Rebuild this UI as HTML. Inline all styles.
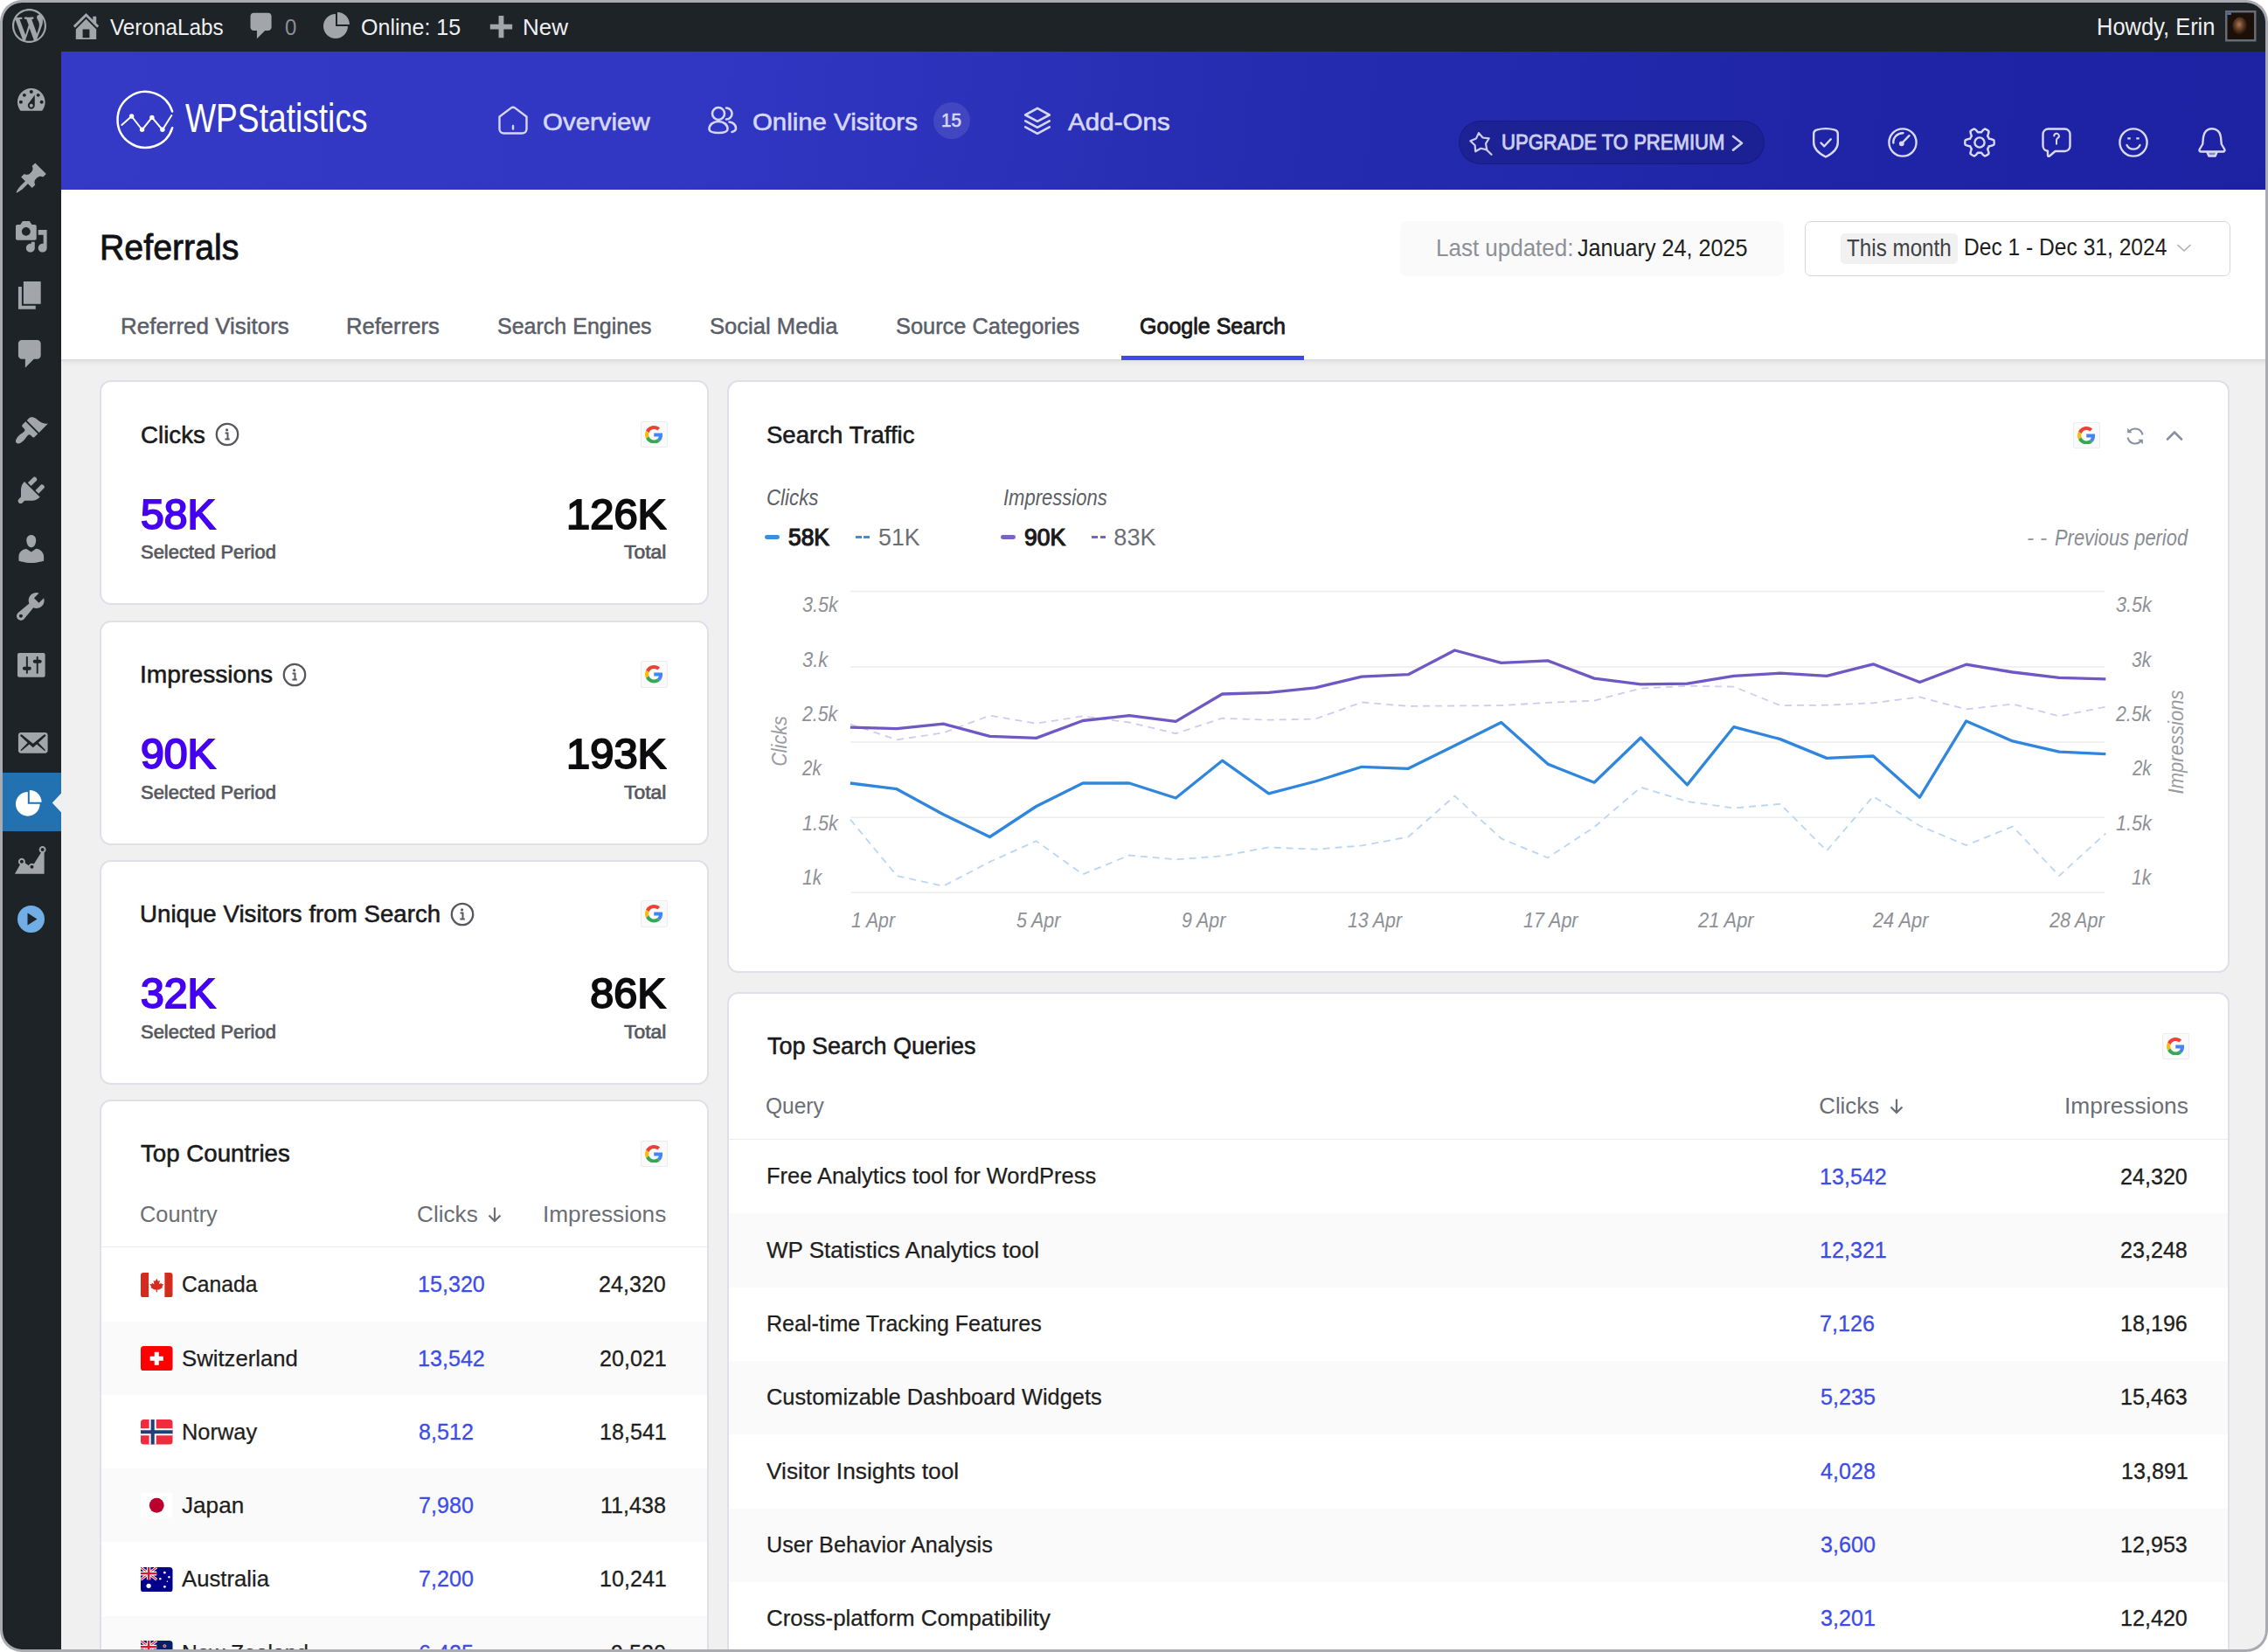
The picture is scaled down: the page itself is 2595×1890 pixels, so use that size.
<!DOCTYPE html>
<html lang="en"><head><meta charset="utf-8"><title>Referrals - Google Search - WP Statistics</title>
<style>
html,body{margin:0;padding:0;background:#fff;width:2595px;height:1890px;overflow:hidden}
body{font-family:"Liberation Sans",sans-serif;position:relative}
#frame{position:absolute;left:0;top:0;width:2595px;height:1890px;border-radius:25px;overflow:hidden;background:#a9abb0}
#inner{position:absolute;left:3px;top:3px;right:3px;bottom:3px;border-radius:22px;overflow:hidden;background:#f0f0f1}
#c{position:absolute;left:-3px;top:-3px;width:2595px;height:1890px}
.a{position:absolute;display:block}
.t{position:absolute;white-space:nowrap;line-height:1;transform-origin:0 0}
.gb{background:#fafafa;border:1.5px solid #ececee;box-sizing:border-box;border-radius:2px}
</style></head><body>
<div id="frame"><div id="inner"><div id="c">
<div class="a" style="left:0.0px;top:0.0px;width:2595.0px;height:58.6px;background:#1d2327"></div>
<div class="a" style="left:0.0px;top:58.0px;width:70.2px;height:1890.0px;background:#1d2327"></div>
<svg class="a" style="left:14.0px;top:9.8px" width="39.0" height="39.0" viewBox="0 0 20 20"><path fill="#a2a6ab" d="M20 10c0-5.51-4.49-10-10-10C4.48 0 0 4.49 0 10c0 5.52 4.48 10 10 10 5.51 0 10-4.48 10-10zM7.78 15.37L4.37 6.22c.55-.02 1.17-.08 1.17-.08.5-.06.44-1.13-.06-1.11 0 0-1.45.11-2.37.11-.18 0-.37 0-.58-.01C4.12 2.69 6.87 1.11 10 1.11c2.33 0 4.45.87 6.05 2.34-.68-.11-1.65.39-1.65 1.58 0 .74.45 1.36.9 2.1.35.61.55 1.36.55 2.46 0 1.49-1.4 5-1.4 5l-3.03-8.37c.54-.02.82-.17.82-.17.5-.05.44-1.25-.06-1.22 0 0-1.44.12-2.38.12-.87 0-2.33-.12-2.33-.12-.5-.03-.56 1.2-.06 1.22l.92.08 1.26 3.41zM17.41 10c.24-.64.74-1.87.43-4.25.7 1.29 1.05 2.71 1.05 4.25 0 3.29-1.73 6.24-4.4 7.78.97-2.59 1.94-5.2 2.92-7.78zM6.1 18.09C3.12 16.65 1.11 13.53 1.11 10c0-1.3.23-2.48.72-3.59C3.25 10.3 4.67 14.2 6.1 18.09zm4.03-6.63l2.58 6.98c-.86.29-1.76.45-2.71.45-.79 0-1.57-.11-2.29-.33.81-2.38 1.62-4.74 2.42-7.1z"/></svg>
<svg class="a" style="left:78.8px;top:9.8px" width="39.0" height="39.0" viewBox="0 0 20 20"><path fill="#a2a6ab" d="M16 8.5l1.53 1.53-1.06 1.06L10 4.62l-6.47 6.47-1.06-1.06L10 2.5l4 4v-2h2v4zm-6-2.46l6 5.99V18H4v-5.97zM12 17v-5H8v5h4z"/></svg>
<div class="t" style="left:125.9px;top:18.27px;font-size:26.6px;color:#f0f0f1;transform:scaleX(0.9126);">VeronaLabs</div>
<svg class="a" style="left:281.3px;top:10.9px" width="37.0" height="37.0" viewBox="0 0 20 20"><path fill="#a2a6ab" d="M5 2h9c1.1 0 2 .9 2 2v7c0 1.1-.9 2-2 2h-2l-5 5v-5H5c-1.1 0-2-.9-2-2V4c0-1.1.9-2 2-2z"/></svg>
<div class="t" style="left:325.56px;top:18.27px;font-size:26.6px;color:#8c8f94;transform:scaleX(0.9026);">0</div>
<svg class="a" style="left:365.5px;top:7.6px" width="40.0" height="40.0" viewBox="0 0 20 20"><path fill="#a2a6ab" d="M10 10V3c3.87 0 7 3.13 7 7h-7zM9 4v7h7c0 3.87-3.13 7-7 7s-7-3.13-7-7 3.13-7 7-7z"/></svg>
<div class="t" style="left:413.02px;top:18.27px;font-size:26.6px;color:#f0f0f1;transform:scaleX(0.942);">Online: 15</div>
<svg class="a" style="left:553.3px;top:13.8px" width="39.0" height="39.0" viewBox="0 0 20 20"><path fill="#a2a6ab" d="M17 7v3h-5v5H9v-5H4V7h5V2h3v5h5z"/></svg>
<div class="t" style="left:598.17px;top:18.27px;font-size:26.6px;color:#f0f0f1;transform:scaleX(0.9785);">New</div>
<div class="t" style="left:2398.71px;top:18.3px;font-size:27.03px;color:#f0f0f1;transform:scaleX(0.943);">Howdy, Erin</div>
<svg class="a" style="left:2546px;top:12px" width="35.5" height="35.5" viewBox="0 0 36 36"><defs><radialGradient id="av" cx="0.45" cy="0.42" r="0.6"><stop offset="0" stop-color="#a97a58"/><stop offset="0.5" stop-color="#5e3a24"/><stop offset="1" stop-color="#160b06"/></radialGradient></defs><rect x="0" y="0" width="36" height="36" fill="#686c74"/><rect x="2.5" y="2.5" width="31" height="31" fill="#1b0f09"/><ellipse cx="17" cy="18" rx="8.5" ry="10.5" fill="url(#av)"/><rect x="2.5" y="2.5" width="4.5" height="2.5" fill="#4a7bc0"/></svg>
<svg class="a" style="left:16.0px;top:95.2px" width="39.6" height="39.6" viewBox="0 0 20 20"><path fill="#a2a6ab" d="M3.76 16h12.48c1.1-1.37 1.76-3.11 1.76-5 0-4.42-3.58-8-8-8s-8 3.58-8 8c0 1.89.66 3.63 1.76 5zM10 4c.55 0 1 .45 1 1s-.45 1-1 1-1-.45-1-1 .45-1 1-1zM6 6c.55 0 1 .45 1 1s-.45 1-1 1-1-.45-1-1 .45-1 1-1zm8 0c.55 0 1 .45 1 1s-.45 1-1 1-1-.45-1-1 .45-1 1-1zm-5.37 5.55L12 7v6c0 1.1-.9 2-2 2s-2-.9-2-2c0-.57.24-1.08.63-1.45zM4 10c.55 0 1 .45 1 1s-.45 1-1 1-1-.45-1-1 .45-1 1-1zm12 0c.55 0 1 .45 1 1s-.45 1-1 1-1-.45-1-1 .45-1 1-1zm-5 3c0-.55-.45-1-1-1s-1 .45-1 1 .45 1 1 1 1-.45 1-1z"/></svg>
<svg class="a" style="left:15.5px;top:183.8px" width="39.6" height="39.6" viewBox="0 0 20 20"><path fill="#a2a6ab" d="M10.44 3.02l1.82-1.82 6.36 6.35-1.83 1.82c-1.05-.68-2.48-.57-3.41.36l-.75.75c-.92.93-1.04 2.35-.35 3.41l-1.83 1.82-2.41-2.41-2.8 2.79c-.42.42-3.38 2.71-3.8 2.29s1.86-3.39 2.28-3.81l2.79-2.79L4.1 9.36l1.83-1.82c1.05.69 2.48.57 3.4-.36l.75-.75c.93-.92 1.05-2.35.36-3.41z"/></svg>
<svg class="a" style="left:15.8px;top:251.2px" width="39.6" height="39.6" viewBox="0 0 20 20"><path fill="#a2a6ab" d="M13 11V4c0-.55-.45-1-1-1h-1.67L9 1H5L3.67 3H2c-.55 0-1 .45-1 1v7c0 .55.45 1 1 1h10c.55 0 1-.45 1-1zM7 4.5c1.38 0 2.5 1.12 2.5 2.5S8.38 9.5 7 9.5 4.5 8.38 4.5 7 5.62 4.5 7 4.5zM14 6h5v10.5c0 1.38-1.12 2.5-2.5 2.5S14 17.88 14 16.5s1.12-2.5 2.5-2.5c.17 0 .34.02.5.05V9h-3V6zm-4 8.05V13h2v3.5c0 1.38-1.12 2.5-2.5 2.5S7 17.88 7 16.5 8.12 14 9.5 14c.17 0 .34.02.5.05z"/></svg>
<svg class="a" style="left:14.5px;top:318.2px" width="39.6" height="39.6" viewBox="0 0 20 20"><path fill="#a2a6ab" d="M6 15V2h10v13H6zm-1 1h8v2H3V5h2v11z"/></svg>
<svg class="a" style="left:14.5px;top:385.2px" width="39.6" height="39.6" viewBox="0 0 20 20"><path fill="#a2a6ab" d="M5 2h9c1.1 0 2 .9 2 2v7c0 1.1-.9 2-2 2h-2l-5 5v-5H5c-1.1 0-2-.9-2-2V4c0-1.1.9-2 2-2z"/></svg>
<svg class="a" style="left:15.5px;top:473.2px" width="39.6" height="39.6" viewBox="0 0 20 20"><path fill="#a2a6ab" d="M14.48 11.06L7.41 3.99l1.5-1.5c.5-.56 2.3-.47 3.51.32 1.21.8 1.43 1.28 2.91 2.1 1.18.64 2.45 1.26 4.45.85zm-.71.71L6.7 4.7 4.93 6.47c-.39.39-.39 1.02 0 1.41l1.06 1.06c.39.39.39 1.03 0 1.42-.6.6-1.43 1.11-2.21 1.69-.35.26-.7.53-1.01.84C1.43 14.23.4 16.08 1.4 17.07c.99 1 2.84-.03 4.18-1.36.31-.31.58-.66.85-1.02.57-.78 1.08-1.61 1.69-2.21.39-.39 1.02-.39 1.41 0l1.06 1.06c.39.39 1.02.39 1.41 0z"/></svg>
<svg class="a" style="left:15.8px;top:541.2px" width="39.6" height="39.6" viewBox="0 0 20 20"><path fill="#a2a6ab" d="M13.11 4.36L9.87 7.6 8 5.73l3.24-3.24c.35-.34 1.05-.2 1.56.32.52.51.66 1.21.31 1.55zm-8 1.77l.91-1.12 9.01 9.01-1.19.84c-.71.71-2.63 1.16-3.82 1.16H6.14L4.9 17.26c-.59.59-1.54.59-2.12 0-.59-.58-.59-1.53 0-2.12l1.24-1.24v-3.88c0-1.13.4-3.19 1.09-3.89zm7.26 3.97l3.24-3.24c.34-.35 1.04-.21 1.55.31.52.51.66 1.21.31 1.55l-3.24 3.25z"/></svg>
<svg class="a" style="left:15.5px;top:608.2px" width="39.6" height="39.6" viewBox="0 0 20 20"><path fill="#a2a6ab" d="M10 9.25c-2.27 0-2.73-3.44-2.73-3.44C7 4.02 7.82 2 9.97 2c2.16 0 2.98 2.02 2.71 3.81 0 0-.41 3.44-2.68 3.44zm0 2.57L12.72 10c2.39 0 4.52 2.33 4.52 4.53v2.49s-3.65 1.13-7.24 1.13c-3.65 0-7.24-1.13-7.24-1.13v-2.49c0-2.25 1.94-4.48 4.47-4.48z"/></svg>
<svg class="a" style="left:15.2px;top:674.2px" width="39.6" height="39.6" viewBox="0 0 20 20"><path fill="#a2a6ab" d="M16.68 9.77c-1.34 1.34-3.3 1.67-4.95.99l-5.41 6.52c-.99.99-2.59.99-3.58 0s-.99-2.59 0-3.57l6.52-5.42c-.68-1.65-.35-3.61.99-4.95 1.28-1.28 3.12-1.62 4.72-1.06l-2.89 2.89 2.82 2.82 2.86-2.87c.53 1.58.18 3.39-1.08 4.65zM3.81 16.21c.4.39 1.04.39 1.43 0 .4-.4.4-1.04 0-1.43-.39-.4-1.03-.4-1.43 0-.39.39-.39 1.03 0 1.43z"/></svg>
<svg class="a" style="left:16.4px;top:741.2px" width="39.6" height="39.6" viewBox="0 0 20 20"><path fill="#a2a6ab" d="M18 16V4c0-.55-.45-1-1-1H3c-.55 0-1 .45-1 1v12c0 .55.45 1 1 1h14c.55 0 1-.45 1-1zM8 11h1c.55 0 1 .45 1 1s-.45 1-1 1H8v1.5c0 .28-.22.5-.5.5s-.5-.22-.5-.5V13H6c-.55 0-1-.45-1-1s.45-1 1-1h1V5.5c0-.28.22-.5.5-.5s.5.22.5.5V11zm5-2h-1c-.55 0-1-.45-1-1s.45-1 1-1h1V5.5c0-.28.22-.5.5-.5s.5.22.5.5V7h1c.55 0 1 .45 1 1s-.45 1-1 1h-1v5.5c0 .28-.22.5-.5.5s-.5-.22-.5-.5V9z"/></svg>
<svg class="a" style="left:16.6px;top:830.2px" width="39.6" height="39.6" viewBox="0 0 20 20"><path fill="#a2a6ab" d="M19 14.5v-9c0-.83-.67-1.5-1.5-1.5H3.49c-.83 0-1.5.67-1.5 1.5v9c0 .83.67 1.5 1.5 1.5H17.5c.83 0 1.5-.67 1.5-1.5zm-1.31-9.11c.33.33.15.67-.03.84L13.6 9.95l3.9 4.06c.12.14.2.36.06.51-.13.16-.43.15-.56.05l-4.37-3.73-2.14 1.95-2.13-1.95-4.37 3.73c-.13.1-.43.11-.56-.05-.14-.15-.06-.37.06-.51l3.9-4.06-4.06-3.72c-.18-.17-.36-.51-.03-.84s.67-.17.95.07l6.24 5.04 6.25-5.04c.28-.24.62-.4.95-.07z"/></svg>
<div class="a" style="left:3.0px;top:884.0px;width:67.2px;height:67.0px;background:#2271b1"></div>
<svg class="a" style="left:14.4px;top:897.7px" width="39.6" height="39.6" viewBox="0 0 20 20"><path fill="#ffffff" d="M10 10V3c3.87 0 7 3.13 7 7h-7zM9 4v7h7c0 3.87-3.13 7-7 7s-7-3.13-7-7 3.13-7 7-7z"/></svg>
<svg class="a" style="left:58.5px;top:906px" width="12" height="25" viewBox="0 0 12 25"><path d="M12 0.5L0.8 12.5L12 24.5z" fill="#f0f0f1"/></svg>
<svg class="a" style="left:15.0px;top:964.2px" width="39.6" height="39.6" viewBox="0 0 20 20"><path fill="#a2a6ab" d="M18 18l.01-12.28c.59-.35.99-.99.99-1.72 0-1.1-.9-2-2-2s-2 .9-2 2c0 .8.47 1.48 1.14 1.8l-4.13 6.58c-.33-.24-.73-.38-1.16-.38-.84 0-1.55.51-1.85 1.24l-2.14-1.53c.09-.22.14-.46.14-.71 0-1.11-.89-2-2-2-1.1 0-2 .89-2 2 0 .73.4 1.36.98 1.71L1 18h17zM17 3c.55 0 1 .45 1 1s-.45 1-1 1-1-.45-1-1 .45-1 1-1zM5 10c.55 0 1 .45 1 1s-.45 1-1 1-1-.45-1-1 .45-1 1-1zm5.85 3c.55 0 1 .45 1 1s-.45 1-1 1-1-.45-1-1 .45-1 1-1z"/></svg>
<svg class="a" style="left:19.5px;top:1035.5px" width="31" height="31" viewBox="0 0 31 31"><circle cx="15.5" cy="15.5" r="15.5" fill="#72aee6"/><path d="M11.5 8.5L22.5 15.5L11.5 22.5z" fill="#1d2327"/></svg>
<div class="a" style="left:70.2px;top:58.6px;width:2524.8px;height:158.0px;background:linear-gradient(96deg,#343ac6 0%,#3137c3 28%,#262cb0 55%,#1f25a6 80%,#1c22a2 100%)"></div>
<svg class="a" style="left:128.6px;top:98px" width="78" height="78" viewBox="0 0 78 78"><g fill="none" stroke="#fff" stroke-width="2.5" stroke-linecap="round" stroke-linejoin="round"><path d="M68.1 29.5A32 32 0 1 0 68.1 48.3"/><path d="M10.3 44.9L21.6 35L33.6 50.5L44.9 36.4L56.9 50.5L67.3 34" stroke-width="2"/></g><circle cx="21.6" cy="35" r="2.7" fill="#fff"/><circle cx="33.6" cy="50.3" r="2.7" fill="#fff"/><circle cx="44.9" cy="36.4" r="2.7" fill="#fff"/><circle cx="56.9" cy="50.3" r="2.7" fill="#fff"/></svg>
<div class="t" style="left:211.55px;top:113.4px;font-size:45.93px;color:#ffffff;transform:scaleX(0.8092);">WPStatistics</div>
<svg class="a" style="left:567px;top:119px" width="40" height="38" viewBox="0 0 40 38"><g fill="none" stroke="#d6d7f6" stroke-width="2.4" stroke-linecap="round" stroke-linejoin="round"><path d="M4.5 14.5L17.6 4.6a4 4 0 0 1 4.8 0L35.5 14.5V28.5a5 5 0 0 1-5 5h-21a5 5 0 0 1-5-5z"/><path d="M20 25v3.5"/></g></svg>
<div class="t" style="left:621.12px;top:125.56px;font-size:27.33px;color:#d6d7f6;transform:scaleX(1.0775);-webkit-text-stroke:0.6px #d6d7f6;">Overview</div>
<svg class="a" style="left:807px;top:119px" width="40" height="38" viewBox="0 0 40 38"><g fill="none" stroke="#d6d7f6" stroke-width="2.6" stroke-linecap="round" stroke-linejoin="round"><circle cx="15" cy="11" r="7"/><path d="M4.5 28.5c0-5 4.5-8.5 10.5-8.5s10.5 3.5 10.5 8.5c0 3-4.5 4.5-10.5 4.5s-10.5-1.5-10.5-4.5z"/><path d="M24 4.5a6.5 6.5 0 0 1 0 13"/><path d="M27.5 20.5c4.5 0.8 7.5 3.6 7.5 7.5c0 1.8-1.6 3.2-4.5 4"/></g></svg>
<div class="t" style="left:860.72px;top:125.56px;font-size:27.33px;color:#d6d7f6;transform:scaleX(1.0749);-webkit-text-stroke:0.6px #d6d7f6;">Online Visitors</div>
<div class="a" style="left:1067.5px;top:117px;width:42px;height:42px;border-radius:21px;background:rgba(255,255,255,0.105)"></div>
<div class="t" style="left:1076.78px;top:126.45px;font-size:22.97px;color:#d6d7f6;transform:scaleX(0.8971);-webkit-text-stroke:0.7px #d6d7f6;">15</div>
<svg class="a" style="left:1167px;top:119px" width="40" height="38" viewBox="0 0 40 38"><g fill="none" stroke="#d6d7f6" stroke-width="2.6" stroke-linecap="round" stroke-linejoin="round"><path d="M20 4.8L33.8 12.5L20 19.8L6.2 12.5z"/><path d="M6.2 19.3L20 26.8L33.8 19.3"/><path d="M6.2 26.3L20 33.8L33.8 26.3"/></g></svg>
<div class="t" style="left:1221.54px;top:125.56px;font-size:27.33px;color:#d6d7f6;transform:scaleX(1.0825);-webkit-text-stroke:0.6px #d6d7f6;">Add-Ons</div>
<div class="a" style="left:1668.9px;top:138.2px;width:350.0px;height:49.6px;border-radius:25px;background:rgba(24,28,130,0.55);border:1px solid rgba(20,24,110,0.55);box-sizing:border-box"></div>
<svg class="a" style="left:1681px;top:150.5px" width="30" height="30" viewBox="0 0 30 30"><g fill="none" stroke="#cdcff1" stroke-width="2.2" stroke-linecap="round" stroke-linejoin="round"><path d="M10.9 1.1 L15.6 6.5 L22.7 7.3 L19.0 13.4 L20.3 20.4 L13.4 18.8 L7.2 22.3 L6.6 15.2 L1.4 10.3 L7.9 7.6Z"/><path d="M20.5 21l5 4.8"/></g></svg>
<div class="t" style="left:1718.35px;top:151.11px;font-size:23.84px;color:#cdcff1;transform:scaleX(0.9256);-webkit-text-stroke:0.9px #cdcff1;">UPGRADE TO PREMIUM</div>
<svg class="a" style="left:1978px;top:151px" width="20" height="26" viewBox="0 0 20 26"><path d="M5 5L15 12.8L5 20.6" fill="none" stroke="#cdcff1" stroke-width="2.6" stroke-linecap="round" stroke-linejoin="round"/></svg>
<svg class="a" style="left:2070.0px;top:144.3px" width="38" height="38" viewBox="0 0 38 38"><g fill="none" stroke="#d9daf7" stroke-width="2.4" stroke-linecap="round" stroke-linejoin="round"><path d="M8.5 4.6Q19 1.6 29.5 4.6Q32.8 5.5 32.8 9V19C32.8 27 26 32 19 35.5C12 32 5.2 27 5.2 19V9Q5.2 5.5 8.5 4.6Z"/><path d="M13.5 19.5l3.8 3.8l7.5-8"/></g></svg>
<svg class="a" style="left:2158.0px;top:144.3px" width="38" height="38" viewBox="0 0 38 38"><g fill="none" stroke="#d9daf7" stroke-width="2.4" stroke-linecap="round" stroke-linejoin="round"><circle cx="19" cy="19" r="15.6"/><path d="M8.3 19.5A10.8 10.8 0 0 1 19.5 8.2"/><circle cx="17.8" cy="20.3" r="1.7" fill="#d9daf7"/><path d="M18.5 19.5l8-8.3"/></g></svg>
<svg class="a" style="left:2246.0px;top:144.3px" width="38" height="38" viewBox="0 0 38 38"><g fill="none" stroke="#d9daf7" stroke-width="2.4" stroke-linecap="round" stroke-linejoin="round"><circle cx="19" cy="19" r="5.6"/><path d="M35.7 19.0 L35.7 19.6 L35.7 20.2 L35.6 20.7 L35.5 21.3 L35.1 21.8 L34.2 22.2 L33.2 22.5 L32.2 22.8 L31.3 23.0 L30.3 23.1 L29.8 23.4 L29.7 23.8 L29.5 24.1 L29.3 24.5 L29.1 24.8 L28.9 25.2 L28.7 25.5 L28.5 25.9 L28.2 26.2 L28.2 26.8 L28.6 27.6 L28.9 28.6 L29.2 29.5 L29.4 30.5 L29.5 31.5 L29.3 32.2 L28.8 32.5 L28.3 32.8 L27.8 33.2 L27.4 33.5 L26.8 33.7 L26.3 34.0 L25.8 34.3 L25.3 34.5 L24.6 34.3 L23.8 33.8 L23.0 33.1 L22.3 32.3 L21.7 31.6 L21.1 30.9 L20.6 30.6 L20.2 30.6 L19.8 30.7 L19.4 30.7 L19.0 30.7 L18.6 30.7 L18.2 30.7 L17.8 30.6 L17.4 30.6 L16.9 30.9 L16.3 31.6 L15.7 32.3 L15.0 33.1 L14.2 33.8 L13.4 34.3 L12.7 34.5 L12.2 34.3 L11.7 34.0 L11.2 33.7 L10.7 33.5 L10.2 33.2 L9.7 32.8 L9.2 32.5 L8.7 32.2 L8.5 31.5 L8.6 30.5 L8.8 29.5 L9.1 28.6 L9.4 27.6 L9.8 26.8 L9.8 26.2 L9.5 25.9 L9.3 25.5 L9.1 25.2 L8.9 24.8 L8.7 24.5 L8.5 24.1 L8.3 23.8 L8.2 23.4 L7.7 23.1 L6.7 23.0 L5.8 22.8 L4.8 22.5 L3.8 22.2 L2.9 21.8 L2.5 21.3 L2.4 20.7 L2.3 20.2 L2.3 19.6 L2.3 19.0 L2.3 18.4 L2.3 17.8 L2.4 17.3 L2.5 16.7 L2.9 16.2 L3.8 15.8 L4.8 15.5 L5.8 15.2 L6.7 15.0 L7.7 14.9 L8.2 14.6 L8.3 14.2 L8.5 13.9 L8.7 13.5 L8.9 13.1 L9.1 12.8 L9.3 12.5 L9.5 12.1 L9.8 11.8 L9.8 11.2 L9.4 10.4 L9.1 9.4 L8.8 8.5 L8.6 7.5 L8.5 6.5 L8.7 5.8 L9.2 5.5 L9.7 5.2 L10.2 4.8 L10.6 4.5 L11.2 4.3 L11.7 4.0 L12.2 3.7 L12.7 3.5 L13.4 3.7 L14.2 4.2 L15.0 4.9 L15.7 5.7 L16.3 6.4 L16.9 7.1 L17.4 7.4 L17.8 7.4 L18.2 7.3 L18.6 7.3 L19.0 7.3 L19.4 7.3 L19.8 7.3 L20.2 7.4 L20.6 7.4 L21.1 7.1 L21.7 6.4 L22.3 5.7 L23.0 4.9 L23.8 4.2 L24.6 3.7 L25.3 3.5 L25.8 3.7 L26.3 4.0 L26.8 4.3 L27.4 4.5 L27.8 4.8 L28.3 5.2 L28.8 5.5 L29.3 5.8 L29.5 6.5 L29.4 7.5 L29.2 8.5 L28.9 9.4 L28.6 10.4 L28.2 11.2 L28.2 11.8 L28.5 12.1 L28.7 12.5 L28.9 12.8 L29.1 13.1 L29.3 13.5 L29.5 13.9 L29.7 14.2 L29.8 14.6 L30.3 14.9 L31.3 15.0 L32.2 15.2 L33.2 15.5 L34.2 15.8 L35.1 16.2 L35.5 16.7 L35.6 17.3 L35.7 17.8 L35.7 18.4Z"/></g></svg>
<svg class="a" style="left:2334.0px;top:144.3px" width="38" height="38" viewBox="0 0 38 38"><g fill="none" stroke="#d9daf7" stroke-width="2.4" stroke-linecap="round" stroke-linejoin="round"><path d="M9.5 3.5h19a6 6 0 0 1 6 6v13.5a6 6 0 0 1-6 6h-11l-6.5 5.5c-1 .8-2 .3-2-.9v-4.8a6 6 0 0 1-5.5-6v-13.3a6 6 0 0 1 6-6z"/><path d="M16.3 11.5a2.8 2.8 0 1 1 4.2 2.4c-1 .6-1.5 1.2-1.5 2.4v4.5" stroke-width="2"/></g></svg>
<svg class="a" style="left:2422.4px;top:144.3px" width="38" height="38" viewBox="0 0 38 38"><g fill="none" stroke="#d9daf7" stroke-width="2.4" stroke-linecap="round" stroke-linejoin="round"><circle cx="19" cy="19" r="15.6"/><path d="M11.5 22c1.5 3 4.3 4.6 7.5 4.6s6-1.6 7.5-4.6"/><path d="M14 13.2v2.4M24 13.2v2.4" stroke-width="3.4" stroke-linecap="butt"/></g></svg>
<svg class="a" style="left:2511.5px;top:144.3px" width="38" height="38" viewBox="0 0 38 38"><g fill="none" stroke="#d9daf7" stroke-width="2.4" stroke-linecap="round" stroke-linejoin="round"><path d="M19 3.3c5.5 0 9.5 4 10 9.5l.8 8.2 3.3 5.5c.9 1.5.1 3-1.6 3h-25c-1.7 0-2.5-1.5-1.6-3l3.3-5.5.8-8.2c.5-5.5 4.5-9.5 10-9.5z"/><path d="M13.5 30l1.8 4.5h7.4l1.8-4.5" fill="#d9daf7" fill-opacity="0.55"/></g></svg>
<div class="a" style="left:70.2px;top:216.6px;width:2524.8px;height:194.9px;background:#fff;box-shadow:0 2px 0 #dddee4,0 3px 7px rgba(0,0,0,0.07)"></div>
<div class="t" style="left:114.38px;top:263.62px;font-size:40.12px;color:#111114;transform:scaleX(0.9796);-webkit-text-stroke:0.8px #111114;">Referrals</div>
<div class="a" style="left:1602.0px;top:253.0px;width:439.0px;height:62.5px;background:#fafafa;border-radius:7px"></div>
<div class="t" style="left:1643.17px;top:269.54px;font-size:28.05px;color:#8d9096;transform:scaleX(0.9263);">Last updated:</div>
<div class="t" style="left:1805.32px;top:269.54px;font-size:28.05px;color:#1e1e20;transform:scaleX(0.8977);">January 24, 2025</div>
<div class="a" style="left:2065.0px;top:253.0px;width:486.5px;height:62.5px;background:#fff;border:1.5px solid #d4d6df;border-radius:7px;box-sizing:border-box"></div>
<div class="a" style="left:2105.5px;top:267.0px;width:134.5px;height:34.5px;background:#f1f1f2;border-radius:5px"></div>
<div class="t" style="left:2112.97px;top:269.61px;font-size:27.62px;color:#404145;transform:scaleX(0.877);">This month</div>
<div class="t" style="left:2246.88px;top:269.24px;font-size:28.05px;color:#1e1e20;transform:scaleX(0.8768);">Dec 1 - Dec 31, 2024</div>
<svg class="a" style="left:2489px;top:277px" width="20" height="14" viewBox="0 0 20 14"><path d="M3 3.5L10 10L17 3.5" fill="none" stroke="#aeb0b8" stroke-width="1.7" stroke-linecap="round" stroke-linejoin="round"/></svg>
<div class="t" style="left:137.52px;top:359.79px;font-size:26.45px;color:#5a5e68;transform:scaleX(0.9819);-webkit-text-stroke:0.5px #5a5e68;">Referred Visitors</div>
<div class="t" style="left:396.15px;top:359.79px;font-size:26.45px;color:#5a5e68;transform:scaleX(0.9689);-webkit-text-stroke:0.5px #5a5e68;">Referrers</div>
<div class="t" style="left:568.92px;top:359.79px;font-size:26.45px;color:#5a5e68;transform:scaleX(0.9463);-webkit-text-stroke:0.5px #5a5e68;">Search Engines</div>
<div class="t" style="left:811.9px;top:359.79px;font-size:26.45px;color:#5a5e68;transform:scaleX(0.9682);-webkit-text-stroke:0.5px #5a5e68;">Social Media</div>
<div class="t" style="left:1025.31px;top:359.79px;font-size:26.45px;color:#5a5e68;transform:scaleX(0.9602);-webkit-text-stroke:0.5px #5a5e68;">Source Categories</div>
<div class="t" style="left:1303.7px;top:359.79px;font-size:26.45px;color:#1a1a1c;transform:scaleX(0.9466);-webkit-text-stroke:0.9px #1a1a1c;">Google Search</div>
<div class="a" style="left:1282.6px;top:407.0px;width:209.2px;height:4.5px;background:#4048e8"></div>
<div class="a" style="left:114.0px;top:435.2px;width:696.5px;height:257.0px;background:#fff;border:2px solid #dedfe7;border-radius:13px;box-sizing:border-box"></div>
<div class="t" style="left:160.59px;top:483.68px;font-size:27.18px;color:#1a1a1c;transform:scaleX(1.0199);-webkit-text-stroke:0.55px #1a1a1c;">Clicks</div>
<svg class="a" style="left:245.3px;top:482.2px" width="30" height="30" viewBox="0 0 30 30"><circle cx="15" cy="15" r="12.2" fill="none" stroke="#56585e" stroke-width="2.3"/><circle cx="14.6" cy="9.8" r="1.6" fill="#56585e"/><path d="M12.6 13.4h2.9v7.2M12.4 20.6h5.4" fill="none" stroke="#56585e" stroke-width="2"/></svg>
<div class="a gb" style="left:733.0px;top:481.7px;width:30.5px;height:30.5px"></div><svg class="a" style="left:738.0px;top:486.7px" width="20.5" height="20.5" viewBox="0 0 48 48"><path fill="#EA4335" d="M24 9.5c3.54 0 6.71 1.22 9.21 3.6l6.85-6.85C35.9 2.38 30.47 0 24 0 14.62 0 6.51 5.38 2.56 13.22l7.98 6.19C12.43 13.72 17.74 9.5 24 9.5z"/><path fill="#4285F4" d="M46.98 24.55c0-1.57-.15-3.09-.38-4.55H24v9.02h12.94c-.58 2.96-2.26 5.48-4.78 7.18l7.73 6c4.51-4.18 7.09-10.36 7.09-17.65z"/><path fill="#FBBC05" d="M10.53 28.59c-.48-1.45-.76-2.99-.76-4.59s.27-3.14.76-4.59l-7.98-6.19C.92 16.46 0 20.12 0 24c0 3.88.92 7.54 2.56 10.78l7.97-6.19z"/><path fill="#34A853" d="M24 48c6.48 0 11.93-2.13 15.89-5.81l-7.73-6c-2.15 1.45-4.92 2.3-8.16 2.3-6.26 0-11.57-4.22-13.47-9.91l-7.98 6.19C6.51 42.62 14.62 48 24 48z"/></svg>
<div class="t" style="left:161.38px;top:563.58px;font-size:48.55px;color:#4500f2;transform:scaleX(0.9894);-webkit-text-stroke:2.00px #4500f2;">58K</div>
<div class="t" style="left:648.08px;top:563.58px;font-size:48.55px;color:#0c0c0e;transform:scaleX(1.007);-webkit-text-stroke:2.00px #0c0c0e;">126K</div>
<div class="t" style="left:160.56px;top:621.33px;font-size:21.8px;color:#56585e;transform:scaleX(1.0063);-webkit-text-stroke:0.7px #56585e;">Selected Period</div>
<div class="t" style="left:713.85px;top:621.33px;font-size:21.8px;color:#56585e;transform:scaleX(1.0492);-webkit-text-stroke:0.7px #56585e;">Total</div>
<div class="a" style="left:114.0px;top:709.5px;width:696.5px;height:257.0px;background:#fff;border:2px solid #dedfe7;border-radius:13px;box-sizing:border-box"></div>
<div class="t" style="left:159.68px;top:757.98px;font-size:27.18px;color:#1a1a1c;transform:scaleX(1.0385);-webkit-text-stroke:0.55px #1a1a1c;">Impressions</div>
<svg class="a" style="left:321.6px;top:756.5px" width="30" height="30" viewBox="0 0 30 30"><circle cx="15" cy="15" r="12.2" fill="none" stroke="#56585e" stroke-width="2.3"/><circle cx="14.6" cy="9.8" r="1.6" fill="#56585e"/><path d="M12.6 13.4h2.9v7.2M12.4 20.6h5.4" fill="none" stroke="#56585e" stroke-width="2"/></svg>
<div class="a gb" style="left:733.0px;top:756.0px;width:30.5px;height:30.5px"></div><svg class="a" style="left:738.0px;top:761.0px" width="20.5" height="20.5" viewBox="0 0 48 48"><path fill="#EA4335" d="M24 9.5c3.54 0 6.71 1.22 9.21 3.6l6.85-6.85C35.9 2.38 30.47 0 24 0 14.62 0 6.51 5.38 2.56 13.22l7.98 6.19C12.43 13.72 17.74 9.5 24 9.5z"/><path fill="#4285F4" d="M46.98 24.55c0-1.57-.15-3.09-.38-4.55H24v9.02h12.94c-.58 2.96-2.26 5.48-4.78 7.18l7.73 6c4.51-4.18 7.09-10.36 7.09-17.65z"/><path fill="#FBBC05" d="M10.53 28.59c-.48-1.45-.76-2.99-.76-4.59s.27-3.14.76-4.59l-7.98-6.19C.92 16.46 0 20.12 0 24c0 3.88.92 7.54 2.56 10.78l7.97-6.19z"/><path fill="#34A853" d="M24 48c6.48 0 11.93-2.13 15.89-5.81l-7.73-6c-2.15 1.45-4.92 2.3-8.16 2.3-6.26 0-11.57-4.22-13.47-9.91l-7.98 6.19C6.51 42.62 14.62 48 24 48z"/></svg>
<div class="t" style="left:161.08px;top:837.88px;font-size:48.55px;color:#4500f2;transform:scaleX(0.9929);-webkit-text-stroke:2.00px #4500f2;">90K</div>
<div class="t" style="left:648.08px;top:837.88px;font-size:48.55px;color:#0c0c0e;transform:scaleX(1.007);-webkit-text-stroke:2.00px #0c0c0e;">193K</div>
<div class="t" style="left:160.56px;top:895.63px;font-size:21.8px;color:#56585e;transform:scaleX(1.0063);-webkit-text-stroke:0.7px #56585e;">Selected Period</div>
<div class="t" style="left:713.85px;top:895.63px;font-size:21.8px;color:#56585e;transform:scaleX(1.0492);-webkit-text-stroke:0.7px #56585e;">Total</div>
<div class="a" style="left:114.0px;top:983.8px;width:696.5px;height:257.0px;background:#fff;border:2px solid #dedfe7;border-radius:13px;box-sizing:border-box"></div>
<div class="t" style="left:159.84px;top:1032.28px;font-size:27.18px;color:#1a1a1c;transform:scaleX(1.0189);-webkit-text-stroke:0.55px #1a1a1c;">Unique Visitors from Search</div>
<svg class="a" style="left:513.8px;top:1030.8px" width="30" height="30" viewBox="0 0 30 30"><circle cx="15" cy="15" r="12.2" fill="none" stroke="#56585e" stroke-width="2.3"/><circle cx="14.6" cy="9.8" r="1.6" fill="#56585e"/><path d="M12.6 13.4h2.9v7.2M12.4 20.6h5.4" fill="none" stroke="#56585e" stroke-width="2"/></svg>
<div class="a gb" style="left:733.0px;top:1030.3px;width:30.5px;height:30.5px"></div><svg class="a" style="left:738.0px;top:1035.3px" width="20.5" height="20.5" viewBox="0 0 48 48"><path fill="#EA4335" d="M24 9.5c3.54 0 6.71 1.22 9.21 3.6l6.85-6.85C35.9 2.38 30.47 0 24 0 14.62 0 6.51 5.38 2.56 13.22l7.98 6.19C12.43 13.72 17.74 9.5 24 9.5z"/><path fill="#4285F4" d="M46.98 24.55c0-1.57-.15-3.09-.38-4.55H24v9.02h12.94c-.58 2.96-2.26 5.48-4.78 7.18l7.73 6c4.51-4.18 7.09-10.36 7.09-17.65z"/><path fill="#FBBC05" d="M10.53 28.59c-.48-1.45-.76-2.99-.76-4.59s.27-3.14.76-4.59l-7.98-6.19C.92 16.46 0 20.12 0 24c0 3.88.92 7.54 2.56 10.78l7.97-6.19z"/><path fill="#34A853" d="M24 48c6.48 0 11.93-2.13 15.89-5.81l-7.73-6c-2.15 1.45-4.92 2.3-8.16 2.3-6.26 0-11.57-4.22-13.47-9.91l-7.98 6.19C6.51 42.62 14.62 48 24 48z"/></svg>
<div class="t" style="left:161.17px;top:1112.18px;font-size:48.55px;color:#4500f2;transform:scaleX(0.9918);-webkit-text-stroke:2.00px #4500f2;">32K</div>
<div class="t" style="left:675.21px;top:1112.18px;font-size:48.55px;color:#0c0c0e;-webkit-text-stroke:2.00px #0c0c0e;">86K</div>
<div class="t" style="left:160.56px;top:1169.93px;font-size:21.8px;color:#56585e;transform:scaleX(1.0063);-webkit-text-stroke:0.7px #56585e;">Selected Period</div>
<div class="t" style="left:713.85px;top:1169.93px;font-size:21.8px;color:#56585e;transform:scaleX(1.0492);-webkit-text-stroke:0.7px #56585e;">Total</div>
<div class="a" style="left:114.0px;top:1257.8px;width:696.5px;height:700.0px;background:#fff;border:2px solid #dedfe7;border-radius:13px;box-sizing:border-box"></div>
<div class="t" style="left:160.97px;top:1306.26px;font-size:27.33px;color:#1a1a1c;transform:scaleX(1.0128);-webkit-text-stroke:0.55px #1a1a1c;">Top Countries</div>
<div class="a gb" style="left:733.0px;top:1304.5px;width:30.5px;height:30.5px"></div><svg class="a" style="left:738.0px;top:1309.5px" width="20.5" height="20.5" viewBox="0 0 48 48"><path fill="#EA4335" d="M24 9.5c3.54 0 6.71 1.22 9.21 3.6l6.85-6.85C35.9 2.38 30.47 0 24 0 14.62 0 6.51 5.38 2.56 13.22l7.98 6.19C12.43 13.72 17.74 9.5 24 9.5z"/><path fill="#4285F4" d="M46.98 24.55c0-1.57-.15-3.09-.38-4.55H24v9.02h12.94c-.58 2.96-2.26 5.48-4.78 7.18l7.73 6c4.51-4.18 7.09-10.36 7.09-17.65z"/><path fill="#FBBC05" d="M10.53 28.59c-.48-1.45-.76-2.99-.76-4.59s.27-3.14.76-4.59l-7.98-6.19C.92 16.46 0 20.12 0 24c0 3.88.92 7.54 2.56 10.78l7.97-6.19z"/><path fill="#34A853" d="M24 48c6.48 0 11.93-2.13 15.89-5.81l-7.73-6c-2.15 1.45-4.92 2.3-8.16 2.3-6.26 0-11.57-4.22-13.47-9.91l-7.98 6.19C6.51 42.62 14.62 48 24 48z"/></svg>
<div class="t" style="left:159.73px;top:1377.29px;font-size:25.87px;color:#6b6e75;transform:scaleX(0.9806);">Country</div>
<div class="t" style="left:476.69px;top:1377.29px;font-size:25.87px;color:#6b6e75;transform:scaleX(1.0108);">Clicks</div>
<svg class="a" style="left:555px;top:1378px" width="22" height="24" viewBox="0 0 22 24"><path d="M11 3.5V19M4.5 12.5L11 19L17.5 12.5" fill="none" stroke="#6b6e75" stroke-width="2.2"/></svg>
<div class="t" style="left:621.29px;top:1377.29px;font-size:25.87px;color:#6b6e75;transform:scaleX(1.0135);">Impressions</div>
<div class="a" style="left:116.0px;top:1426.2px;width:692.5px;height:1.2px;background:#ebecf1"></div>
<svg class="a" style="left:161px;top:1455.5px" width="36.5" height="28.5" viewBox="0 0 36 28"><rect width="36" height="28" rx="3" fill="#fff"/><path d="M0 3a3 3 0 0 1 3-3h6v28H3a3 3 0 0 1-3-3z" fill="#d52b1e"/><path d="M27 0h6a3 3 0 0 1 3 3v22a3 3 0 0 1-3 3h-6z" fill="#d52b1e"/><path d="M18 6.5l1.6 3 2-.6-.8 4.2 2.4-1.6.4 1.5 2.2-.3-1.8 3.3.8.8-4.3 2.4h-1.9v2.8h-1.2v-2.8h-1.9l-4.3-2.4.8-.8-1.8-3.3 2.2.3.4-1.5 2.4 1.6-.8-4.2 2 .6z" fill="#d52b1e"/></svg>
<div class="t" style="left:208.33px;top:1456.29px;font-size:26.45px;color:#1e1e20;transform:scaleX(0.9337);-webkit-text-stroke:0.25px #1e1e20;">Canada</div>
<div class="t" style="left:478.14px;top:1456.42px;font-size:26.31px;color:#3d4be8;transform:scaleX(0.955);-webkit-text-stroke:0.3px #3d4be8;">15,320</div>
<div class="t" style="left:685.37px;top:1456.42px;font-size:26.31px;color:#1e1e20;transform:scaleX(0.955);-webkit-text-stroke:0.3px #1e1e20;">24,320</div>
<div class="a" style="left:116.0px;top:1511.8px;width:692.5px;height:84.2px;background:#fafafa"></div>
<svg class="a" style="left:161px;top:1539.8px" width="36.5" height="28.5" viewBox="0 0 36 28"><rect width="36" height="28" rx="3.5" fill="#ff0000"/><path d="M15.5 6.5h5v5h5v5h-5v5h-5v-5h-5v-5h5z" fill="#fff"/></svg>
<div class="t" style="left:208.33px;top:1540.54px;font-size:26.45px;color:#1e1e20;transform:scaleX(0.9726);-webkit-text-stroke:0.25px #1e1e20;">Switzerland</div>
<div class="t" style="left:478.14px;top:1540.67px;font-size:26.31px;color:#3d4be8;transform:scaleX(0.955);-webkit-text-stroke:0.3px #3d4be8;">13,542</div>
<div class="t" style="left:685.63px;top:1540.67px;font-size:26.31px;color:#1e1e20;transform:scaleX(0.955);-webkit-text-stroke:0.3px #1e1e20;">20,021</div>
<svg class="a" style="left:161px;top:1624.0px" width="36.5" height="28.5" viewBox="0 0 36 28"><rect width="36" height="28" rx="3.5" fill="#ef2b3d"/><path d="M9.5 0h8v28h-8z" fill="#fff"/><path d="M0 10h36v8H0z" fill="#fff"/><path d="M11.5 0h4v28h-4z" fill="#1f3f7a"/><path d="M0 12h36v4H0z" fill="#1f3f7a"/></svg>
<div class="t" style="left:208.33px;top:1624.79px;font-size:26.45px;color:#1e1e20;transform:scaleX(0.9623);-webkit-text-stroke:0.25px #1e1e20;">Norway</div>
<div class="t" style="left:478.97px;top:1624.92px;font-size:26.31px;color:#3d4be8;transform:scaleX(0.955);-webkit-text-stroke:0.3px #3d4be8;">8,512</div>
<div class="t" style="left:685.63px;top:1624.92px;font-size:26.31px;color:#1e1e20;transform:scaleX(0.955);-webkit-text-stroke:0.3px #1e1e20;">18,541</div>
<div class="a" style="left:116.0px;top:1680.2px;width:692.5px;height:84.2px;background:#fafafa"></div>
<svg class="a" style="left:161px;top:1708.2px" width="36.5" height="28.5" viewBox="0 0 36 28"><rect width="36" height="28" rx="3" fill="#ffffff"/><circle cx="18" cy="14" r="8.3" fill="#bc002d"/></svg>
<div class="t" style="left:208.33px;top:1709.04px;font-size:26.45px;color:#1e1e20;transform:scaleX(0.9884);-webkit-text-stroke:0.25px #1e1e20;">Japan</div>
<div class="t" style="left:478.77px;top:1709.17px;font-size:26.31px;color:#3d4be8;transform:scaleX(0.955);-webkit-text-stroke:0.3px #3d4be8;">7,980</div>
<div class="t" style="left:687.36px;top:1709.17px;font-size:26.31px;color:#1e1e20;transform:scaleX(0.955);-webkit-text-stroke:0.3px #1e1e20;">11,438</div>
<svg class="a" style="left:161px;top:1792.5px" width="36.5" height="28.5" viewBox="0 0 36 28"><rect width="36" height="28" rx="3.5" fill="#00008b"/><path d="M0 0h18v14H0z" fill="#00008b"/><path d="M0 0l18 14M18 0L0 14" stroke="#fff" stroke-width="3"/><path d="M0 0l18 14M18 0L0 14" stroke="#e8112d" stroke-width="1.2"/><path d="M9 0v14M0 7h18" stroke="#fff" stroke-width="4.5"/><path d="M9 0v14M0 7h18" stroke="#e8112d" stroke-width="2.4"/><circle cx="9" cy="21" r="2.6" fill="#fff"/><circle cx="27" cy="6" r="1.3" fill="#fff"/><circle cx="32" cy="11" r="1.2" fill="#fff"/><circle cx="22" cy="13" r="1.2" fill="#fff"/><circle cx="27" cy="22" r="1.4" fill="#fff"/><circle cx="30" cy="16" r=".800" fill="#fff"/></svg>
<div class="t" style="left:208.33px;top:1793.29px;font-size:26.45px;color:#1e1e20;transform:scaleX(0.9727);-webkit-text-stroke:0.25px #1e1e20;">Australia</div>
<div class="t" style="left:478.77px;top:1793.42px;font-size:26.31px;color:#3d4be8;transform:scaleX(0.955);-webkit-text-stroke:0.3px #3d4be8;">7,200</div>
<div class="t" style="left:685.63px;top:1793.42px;font-size:26.31px;color:#1e1e20;transform:scaleX(0.955);-webkit-text-stroke:0.3px #1e1e20;">10,241</div>
<div class="a" style="left:116.0px;top:1848.8px;width:692.5px;height:84.2px;background:#fafafa"></div>
<svg class="a" style="left:161px;top:1876.8px" width="36.5" height="28.5" viewBox="0 0 36 28"><rect width="36" height="28" rx="3.5" fill="#012169"/><path d="M0 0h18v14H0z" fill="#012169"/><path d="M0 0l18 14M18 0L0 14" stroke="#fff" stroke-width="3"/><path d="M0 0l18 14M18 0L0 14" stroke="#e8112d" stroke-width="1.2"/><path d="M9 0v14M0 7h18" stroke="#fff" stroke-width="4.5"/><path d="M9 0v14M0 7h18" stroke="#e8112d" stroke-width="2.4"/><circle cx="27" cy="6" r="1.5" fill="#e8112d" stroke="#fff" stroke-width=".600"/><circle cx="31.5" cy="12" r="1.4" fill="#e8112d" stroke="#fff" stroke-width=".600"/><circle cx="23" cy="13.5" r="1.4" fill="#e8112d" stroke="#fff" stroke-width=".600"/><circle cx="27" cy="22" r="1.6" fill="#e8112d" stroke="#fff" stroke-width=".600"/></svg>
<div class="t" style="left:208.33px;top:1877.54px;font-size:26.45px;color:#1e1e20;transform:scaleX(0.9311);-webkit-text-stroke:0.25px #1e1e20;">New Zealand</div>
<div class="t" style="left:478.79px;top:1877.67px;font-size:26.31px;color:#3d4be8;transform:scaleX(0.955);-webkit-text-stroke:0.3px #3d4be8;">6,425</div>
<div class="t" style="left:699.34px;top:1877.67px;font-size:26.31px;color:#1e1e20;transform:scaleX(0.955);-webkit-text-stroke:0.3px #1e1e20;">9,520</div>
<div class="a" style="left:832.0px;top:435.2px;width:1718.5px;height:677.6px;background:#fff;border:2px solid #dedfe7;border-radius:13px;box-sizing:border-box"></div>
<div class="t" style="left:877.04px;top:483.56px;font-size:27.33px;color:#1a1a1c;transform:scaleX(1.0079);-webkit-text-stroke:0.55px #1a1a1c;">Search Traffic</div>
<div class="a gb" style="left:2372.3px;top:482.8px;width:30.5px;height:30.5px"></div><svg class="a" style="left:2377.3px;top:487.8px" width="20.5" height="20.5" viewBox="0 0 48 48"><path fill="#EA4335" d="M24 9.5c3.54 0 6.71 1.22 9.21 3.6l6.85-6.85C35.9 2.38 30.47 0 24 0 14.62 0 6.51 5.38 2.56 13.22l7.98 6.19C12.43 13.72 17.74 9.5 24 9.5z"/><path fill="#4285F4" d="M46.98 24.55c0-1.57-.15-3.09-.38-4.55H24v9.02h12.94c-.58 2.96-2.26 5.48-4.78 7.18l7.73 6c4.51-4.18 7.09-10.36 7.09-17.65z"/><path fill="#FBBC05" d="M10.53 28.59c-.48-1.45-.76-2.99-.76-4.59s.27-3.14.76-4.59l-7.98-6.19C.92 16.46 0 20.12 0 24c0 3.88.92 7.54 2.56 10.78l7.97-6.19z"/><path fill="#34A853" d="M24 48c6.48 0 11.93-2.13 15.89-5.81l-7.73-6c-2.15 1.45-4.92 2.3-8.16 2.3-6.26 0-11.57-4.22-13.47-9.91l-7.98 6.19C6.51 42.62 14.62 48 24 48z"/></svg>
<svg class="a" style="left:2430px;top:486px" width="26" height="26" viewBox="0 0 26 26"><g fill="none" stroke="#8790a0" stroke-width="2"><path d="M21.5 11.5A8.8 8.8 0 0 0 6.5 7.2"/><path d="M4.5 14.5A8.8 8.8 0 0 0 19.5 18.8"/></g><path d="M4.2 3.8v5.4h5.4z" fill="#8790a0"/><path d="M21.8 22.2v-5.4h-5.4z" fill="#8790a0"/></svg>
<svg class="a" style="left:2476px;top:489px" width="24" height="18" viewBox="0 0 24 18"><path d="M4 13.5L12 5.5L20 13.5" fill="none" stroke="#8790a0" stroke-width="2.6" stroke-linecap="round" stroke-linejoin="round"/></svg>
<div class="t" style="left:876.87px;top:555.64px;font-size:26.16px;color:#5c5f66;transform:scaleX(0.8523);font-style:italic;">Clicks</div>
<div class="t" style="left:1147.74px;top:555.64px;font-size:26.16px;color:#5c5f66;transform:scaleX(0.8416);font-style:italic;">Impressions</div>
<div class="a" style="left:874.6px;top:612.2px;width:17.8px;height:4.8px;background:#3b8fe0;border-radius:2.4px"></div>
<div class="t" style="left:902.05px;top:601.26px;font-size:27.33px;color:#1a1a1c;transform:scaleX(0.9636);-webkit-text-stroke:1.2px #1a1a1c;">58K</div>
<div class="a" style="left:979.2px;top:613.2px;width:6.5px;height:3.0px;background:#3b8fe0"></div>
<div class="a" style="left:988.2px;top:613.2px;width:6.5px;height:3.0px;background:#3b8fe0"></div>
<div class="t" style="left:1004.63px;top:601.38px;font-size:27.18px;color:#6b6e75;transform:scaleX(0.9858);">51K</div>
<div class="a" style="left:1144.5px;top:612.2px;width:17.8px;height:4.8px;background:#7a62cc;border-radius:2.4px"></div>
<div class="t" style="left:1171.58px;top:601.26px;font-size:27.33px;color:#1a1a1c;transform:scaleX(0.9691);-webkit-text-stroke:1.2px #1a1a1c;">90K</div>
<div class="a" style="left:1249.3px;top:613.2px;width:6.5px;height:3.0px;background:#7a62cc"></div>
<div class="a" style="left:1258.5px;top:613.2px;width:6.5px;height:3.0px;background:#7a62cc"></div>
<div class="t" style="left:1274.33px;top:601.38px;font-size:27.18px;color:#6b6e75;">83K</div>
<div class="t" style="left:2319.35px;top:602.63px;font-size:25.58px;color:#9a9ca2;transform:scaleX(0.9604);font-style:italic;">- -</div>
<div class="t" style="left:2351.34px;top:602.63px;font-size:25.58px;color:#8a8d93;transform:scaleX(0.8556);font-style:italic;">Previous period</div>
<svg class="a" style="left:832px;top:436px" width="1718" height="676" viewBox="832 436 1718 676"><path d="M973 676.5H2408" stroke="#ecedf1" stroke-width="1.5"/><path d="M973 763.0H2408" stroke="#ecedf1" stroke-width="1.5"/><path d="M973 849.1H2408" stroke="#ecedf1" stroke-width="1.5"/><path d="M973 935.2H2408" stroke="#ecedf1" stroke-width="1.5"/><path d="M973 1021.3H2408" stroke="#ecedf1" stroke-width="1.5"/><polyline points="972.9,828.5 1026.1,846.3 1079.3,838.4 1132.5,818.6 1185.7,827.7 1238.9,819.4 1292.1,826.5 1345.3,839.2 1398.5,821.7 1451.7,823.7 1504.9,822.5 1558.1,803.5 1611.3,807.9 1664.5,807.5 1717.7,807.1 1770.9,803.9 1824.1,801.5 1877.3,787.6 1930.5,784.8 1983.7,785.6 2036.9,807.1 2090.1,806.7 2143.3,804.3 2196.5,797.5 2249.7,811.4 2302.9,805.5 2356.1,819.4 2409.3,808.7" fill="none" stroke="#d3c9f0" stroke-width="1.8" stroke-dasharray="8 6"/><polyline points="972.9,937.6 1026.1,1001.9 1079.3,1013.8 1132.5,986.0 1185.7,962.2 1238.9,1000.3 1292.1,978.5 1345.3,983.3 1398.5,979.3 1451.7,969.4 1504.9,971.7 1558.1,967.4 1611.3,957.5 1664.5,910.6 1717.7,959.4 1770.9,981.3 1824.1,946.3 1877.3,900.7 1930.5,917.0 1983.7,924.5 2036.9,919.8 2090.1,973.3 2143.3,911.0 2196.5,944.8 2249.7,967.0 2302.9,945.6 2356.1,1001.9 2409.3,953.5" fill="none" stroke="#b9d6f4" stroke-width="1.8" stroke-dasharray="8 6"/><polyline points="972.9,832.1 1026.1,833.7 1079.3,828.1 1132.5,842.4 1185.7,844.4 1238.9,824.5 1292.1,818.6 1345.3,825.3 1398.5,794.0 1451.7,792.4 1504.9,786.8 1558.1,774.1 1611.3,771.7 1664.5,744.0 1717.7,758.3 1770.9,755.9 1824.1,776.1 1877.3,782.9 1930.5,782.1 1983.7,773.3 2036.9,770.2 2090.1,773.3 2143.3,759.8 2196.5,780.5 2249.7,760.2 2302.9,769.0 2356.1,775.3 2409.3,776.9" fill="none" stroke="#6f58c4" stroke-width="3.3" stroke-linejoin="round"/><polyline points="972.9,896.0 1026.1,902.7 1079.3,931.7 1132.5,957.5 1185.7,922.5 1238.9,896.0 1292.1,896.0 1345.3,913.0 1398.5,870.2 1451.7,907.9 1504.9,894.0 1558.1,877.3 1611.3,879.3 1664.5,853.1 1717.7,826.5 1770.9,874.1 1824.1,895.2 1877.3,844.0 1930.5,897.9 1983.7,831.7 2036.9,845.6 2090.1,867.4 2143.3,865.0 2196.5,912.2 2249.7,824.9 2302.9,847.9 2356.1,860.2 2409.3,862.6" fill="none" stroke="#2f86dc" stroke-width="3.3" stroke-linejoin="round"/></svg>
<div class="t" style="left:917.9px;top:680.7px;font-size:23.26px;color:#8e9096;transform:scaleX(0.9303);font-style:italic;">3.5k</div>
<div class="t" style="left:917.9px;top:744.2px;font-size:23.26px;color:#8e9096;transform:scaleX(0.9407);font-style:italic;">3.k</div>
<div class="t" style="left:918.4px;top:806.1px;font-size:23.26px;color:#8e9096;transform:scaleX(0.9164);font-style:italic;">2.5k</div>
<div class="t" style="left:918.4px;top:868.00px;font-size:23.26px;color:#8e9096;transform:scaleX(0.8803);font-style:italic;">2k</div>
<div class="t" style="left:917.86px;top:930.7px;font-size:23.26px;color:#8e9096;transform:scaleX(0.9313);font-style:italic;">1.5k</div>
<div class="t" style="left:917.87px;top:992.6px;font-size:23.26px;color:#8e9096;transform:scaleX(0.9057);font-style:italic;">1k</div>
<div class="t" style="left:2420.6px;top:680.7px;font-size:23.26px;color:#8e9096;transform:scaleX(0.9303);font-style:italic;">3.5k</div>
<div class="t" style="left:2439.42px;top:744.2px;font-size:23.26px;color:#8e9096;transform:scaleX(0.9);font-style:italic;">3k</div>
<div class="t" style="left:2421.1px;top:806.1px;font-size:23.26px;color:#8e9096;transform:scaleX(0.9164);font-style:italic;">2.5k</div>
<div class="t" style="left:2439.9px;top:868.00px;font-size:23.26px;color:#8e9096;transform:scaleX(0.8764);font-style:italic;">2k</div>
<div class="t" style="left:2420.56px;top:930.7px;font-size:23.26px;color:#8e9096;transform:scaleX(0.9313);font-style:italic;">1.5k</div>
<div class="t" style="left:2439.38px;top:992.6px;font-size:23.26px;color:#8e9096;transform:scaleX(0.9017);font-style:italic;">1k</div>
<div class="t" style="left:974.27px;top:1040.69px;font-size:23.98px;color:#8e9096;transform:scaleX(0.8862);font-style:italic;">1 Apr</div>
<div class="t" style="left:1162.83px;top:1040.69px;font-size:23.98px;color:#8e9096;transform:scaleX(0.8939);font-style:italic;">5 Apr</div>
<div class="t" style="left:1352.27px;top:1040.69px;font-size:23.98px;color:#8e9096;transform:scaleX(0.8931);font-style:italic;">9 Apr</div>
<div class="t" style="left:1541.77px;top:1040.69px;font-size:23.98px;color:#8e9096;transform:scaleX(0.8902);font-style:italic;">13 Apr</div>
<div class="t" style="left:1742.76px;top:1040.69px;font-size:23.98px;color:#8e9096;transform:scaleX(0.896);font-style:italic;">17 Apr</div>
<div class="t" style="left:1942.5px;top:1040.69px;font-size:23.98px;color:#8e9096;transform:scaleX(0.912);font-style:italic;">21 Apr</div>
<div class="t" style="left:2143.3px;top:1040.69px;font-size:23.98px;color:#8e9096;transform:scaleX(0.9092);font-style:italic;">24 Apr</div>
<div class="t" style="left:2344.5px;top:1040.69px;font-size:23.98px;color:#8e9096;transform:scaleX(0.8978);font-style:italic;">28 Apr</div>
<div class="t" style="left:892.3px;top:848.3px;font-size:24.5px;font-style:italic;color:#9a9ca2;transform:translate(-50%,-50%) rotate(-90deg) scaleX(0.88);transform-origin:50% 50%">Clicks</div>
<div class="t" style="left:2489.5px;top:849px;font-size:24.5px;font-style:italic;color:#9a9ca2;transform:translate(-50%,-50%) rotate(-90deg) scaleX(0.9);transform-origin:50% 50%">Impressions</div>
<div class="a" style="left:832.0px;top:1134.8px;width:1718.5px;height:800.0px;background:#fff;border:2px solid #dedfe7;border-radius:13px;box-sizing:border-box"></div>
<div class="t" style="left:877.68px;top:1183.06px;font-size:27.33px;color:#1a1a1c;transform:scaleX(0.988);-webkit-text-stroke:0.55px #1a1a1c;">Top Search Queries</div>
<div class="a gb" style="left:2474.0px;top:1181.5px;width:30.5px;height:30.5px"></div><svg class="a" style="left:2479.0px;top:1186.5px" width="20.5" height="20.5" viewBox="0 0 48 48"><path fill="#EA4335" d="M24 9.5c3.54 0 6.71 1.22 9.21 3.6l6.85-6.85C35.9 2.38 30.47 0 24 0 14.62 0 6.51 5.38 2.56 13.22l7.98 6.19C12.43 13.72 17.74 9.5 24 9.5z"/><path fill="#4285F4" d="M46.98 24.55c0-1.57-.15-3.09-.38-4.55H24v9.02h12.94c-.58 2.96-2.26 5.48-4.78 7.18l7.73 6c4.51-4.18 7.09-10.36 7.09-17.65z"/><path fill="#FBBC05" d="M10.53 28.59c-.48-1.45-.76-2.99-.76-4.59s.27-3.14.76-4.59l-7.98-6.19C.92 16.46 0 20.12 0 24c0 3.88.92 7.54 2.56 10.78l7.97-6.19z"/><path fill="#34A853" d="M24 48c6.48 0 11.93-2.13 15.89-5.81l-7.73-6c-2.15 1.45-4.92 2.3-8.16 2.3-6.26 0-11.57-4.22-13.47-9.91l-7.98 6.19C6.51 42.62 14.62 48 24 48z"/></svg>
<div class="t" style="left:876.35px;top:1253.09px;font-size:25.87px;color:#6b6e75;transform:scaleX(0.9468);">Query</div>
<div class="t" style="left:2081.21px;top:1253.09px;font-size:25.87px;color:#6b6e75;">Clicks</div>
<svg class="a" style="left:2159px;top:1254px" width="22" height="24" viewBox="0 0 22 24"><path d="M11 3.5V19M4.5 12.5L11 19L17.5 12.5" fill="none" stroke="#6b6e75" stroke-width="2.2"/></svg>
<div class="t" style="left:2362.18px;top:1253.09px;font-size:25.87px;color:#6b6e75;transform:scaleX(1.0179);">Impressions</div>
<div class="a" style="left:834.0px;top:1302.5px;width:1714.5px;height:1.2px;background:#ebecf1"></div>
<div class="t" style="left:877.33px;top:1332.39px;font-size:26.45px;color:#1e1e20;transform:scaleX(0.9626);-webkit-text-stroke:0.25px #1e1e20;">Free Analytics tool for WordPress</div>
<div class="t" style="left:2081.74px;top:1332.52px;font-size:26.31px;color:#3d4be8;transform:scaleX(0.955);-webkit-text-stroke:0.3px #3d4be8;">13,542</div>
<div class="t" style="left:2426.27px;top:1332.52px;font-size:26.31px;color:#1e1e20;transform:scaleX(0.955);-webkit-text-stroke:0.3px #1e1e20;">24,320</div>
<div class="a" style="left:834.0px;top:1388.3px;width:1714.5px;height:84.3px;background:#fafafa"></div>
<div class="t" style="left:877.33px;top:1416.69px;font-size:26.45px;color:#1e1e20;transform:scaleX(0.9845);-webkit-text-stroke:0.25px #1e1e20;">WP Statistics Analytics tool</div>
<div class="t" style="left:2081.74px;top:1416.82px;font-size:26.31px;color:#3d4be8;transform:scaleX(0.955);-webkit-text-stroke:0.3px #3d4be8;">12,321</div>
<div class="t" style="left:2426.4px;top:1416.82px;font-size:26.31px;color:#1e1e20;transform:scaleX(0.955);-webkit-text-stroke:0.3px #1e1e20;">23,248</div>
<div class="t" style="left:877.33px;top:1500.99px;font-size:26.45px;color:#1e1e20;transform:scaleX(0.9476);-webkit-text-stroke:0.25px #1e1e20;">Real-time Tracking Features</div>
<div class="t" style="left:2082.37px;top:1501.12px;font-size:26.31px;color:#3d4be8;transform:scaleX(0.955);-webkit-text-stroke:0.3px #3d4be8;">7,126</div>
<div class="t" style="left:2426.4px;top:1501.12px;font-size:26.31px;color:#1e1e20;transform:scaleX(0.955);-webkit-text-stroke:0.3px #1e1e20;">18,196</div>
<div class="a" style="left:834.0px;top:1556.9px;width:1714.5px;height:84.3px;background:#fafafa"></div>
<div class="t" style="left:877.33px;top:1585.29px;font-size:26.45px;color:#1e1e20;transform:scaleX(0.9598);-webkit-text-stroke:0.25px #1e1e20;">Customizable Dashboard Widgets</div>
<div class="t" style="left:2082.65px;top:1585.42px;font-size:26.31px;color:#3d4be8;transform:scaleX(0.955);-webkit-text-stroke:0.3px #3d4be8;">5,235</div>
<div class="t" style="left:2426.4px;top:1585.42px;font-size:26.31px;color:#1e1e20;transform:scaleX(0.955);-webkit-text-stroke:0.3px #1e1e20;">15,463</div>
<div class="t" style="left:877.33px;top:1669.59px;font-size:26.45px;color:#1e1e20;transform:scaleX(0.9944);-webkit-text-stroke:0.25px #1e1e20;">Visitor Insights tool</div>
<div class="t" style="left:2083.1px;top:1669.72px;font-size:26.31px;color:#3d4be8;transform:scaleX(0.955);-webkit-text-stroke:0.3px #3d4be8;">4,028</div>
<div class="t" style="left:2426.53px;top:1669.72px;font-size:26.31px;color:#1e1e20;transform:scaleX(0.955);-webkit-text-stroke:0.3px #1e1e20;">13,891</div>
<div class="a" style="left:834.0px;top:1725.5px;width:1714.5px;height:84.3px;background:#fafafa"></div>
<div class="t" style="left:877.33px;top:1753.89px;font-size:26.45px;color:#1e1e20;transform:scaleX(0.9517);-webkit-text-stroke:0.25px #1e1e20;">User Behavior Analysis</div>
<div class="t" style="left:2082.7px;top:1754.02px;font-size:26.31px;color:#3d4be8;transform:scaleX(0.955);-webkit-text-stroke:0.3px #3d4be8;">3,600</div>
<div class="t" style="left:2426.4px;top:1754.02px;font-size:26.31px;color:#1e1e20;transform:scaleX(0.955);-webkit-text-stroke:0.3px #1e1e20;">12,953</div>
<div class="t" style="left:877.33px;top:1838.19px;font-size:26.45px;color:#1e1e20;transform:scaleX(0.9785);-webkit-text-stroke:0.25px #1e1e20;">Cross-platform Compatibility</div>
<div class="t" style="left:2082.7px;top:1838.32px;font-size:26.31px;color:#3d4be8;transform:scaleX(0.955);-webkit-text-stroke:0.3px #3d4be8;">3,201</div>
<div class="t" style="left:2426.27px;top:1838.32px;font-size:26.31px;color:#1e1e20;transform:scaleX(0.955);-webkit-text-stroke:0.3px #1e1e20;">12,420</div>
</div></div></div>
</body></html>
